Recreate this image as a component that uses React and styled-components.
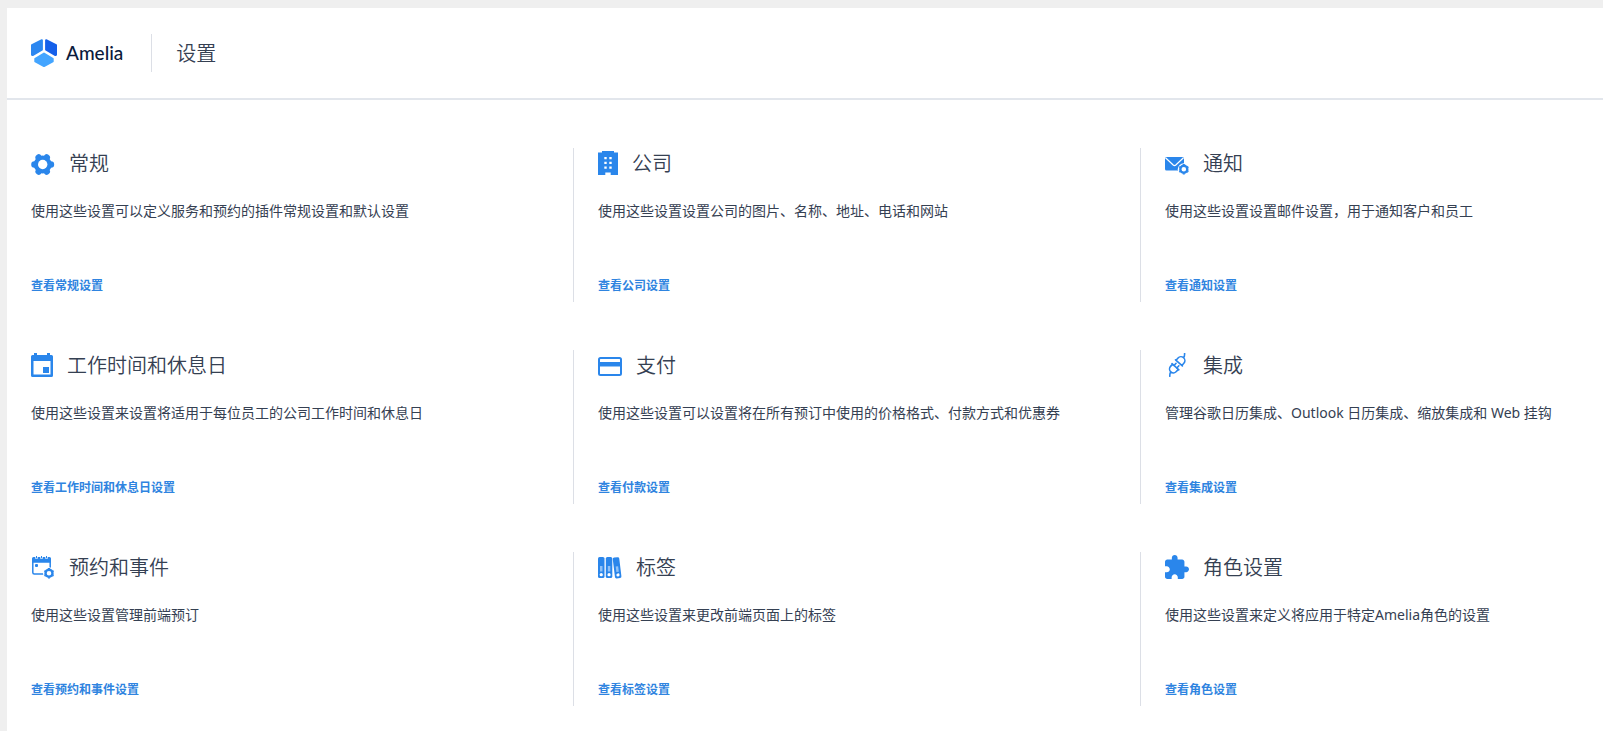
import React from "react";
import styled, { createGlobalStyle } from "styled-components";

const GlobalStyle = createGlobalStyle`
  * { box-sizing: border-box; }
  body {
    margin: 0;
    background: #efefef;
    color: #354052;
    font-family: "Noto Sans", "Noto Sans CJK SC", sans-serif;
  }
`;

const Page = styled.div`
  padding: 8px 0 0 7px;
`;

const Panel = styled.main`
  min-height: calc(100vh - 8px);
  background: #fff;
`;

const Header = styled.header`
  display: flex;
  align-items: center;
  height: 92px;
  padding: 0 24px;
  border-bottom: 2px solid #e2e6ec;
`;

const Brand = styled.div`
  display: flex;
  align-items: center;
  gap: 9px;
  padding-right: 28px;
`;

const BrandName = styled.span`
  color: #0b1a3c;
  font-family: Lato, sans-serif;
  font-size: 19px;
  font-weight: 500;
  line-height: 28px;
`;

const PageTitle = styled.h1`
  margin: 0;
  padding-left: 24px;
  border-left: 1px solid #dcdfe6;
  font-family: "Noto Sans CJK SC", sans-serif;
  font-size: 20px;
  font-weight: 350;
  line-height: 38px;
`;

const Grid = styled.div`
  display: grid;
  grid-template-columns: 27fr 27fr 22fr;
  row-gap: 48px;
  padding: 48px 0 24px;
`;

const Card = styled.section`
  min-width: 0;
  padding: 0 0 7px 24px;
  border-right: 1px solid #dcdfe6;

  &:nth-child(3n) {
    border-right: 0;
  }
`;

const CardHead = styled.div`
  display: flex;
  align-items: center;
  gap: 14px;
  height: 30px;

  svg {
    flex: none;
    color: #2a86eb;
  }
`;

const CardTitle = styled.h2`
  margin: 0;
  font-family: "Noto Sans CJK SC", sans-serif;
  font-size: 20px;
  font-weight: 350;
  line-height: 30px;
`;

const CardText = styled.p`
  margin: 23px 0 56px;
  font-size: 14px;
  line-height: 20px;
`;

const CardLink = styled.a`
  display: block;
  width: fit-content;
  color: #2f84e0;
  font-size: 12px;
  font-weight: 600;
  line-height: 18px;
  text-decoration: none;
`;

const Logo = () => (
  <svg width="26" height="28" viewBox="0 0 26 28" strokeWidth="2" strokeLinejoin="round" aria-hidden="true">
    <path d="M10.9 1.2 1 6.2v9.6l.6.3 9.3-5.4z" fill="#2c87f0" stroke="#2c87f0" />
    <path d="M15.1 1.2 25 6.2v9.6l-.6.3-9.3-5.4z" fill="#1560ea" stroke="#1560ea" />
    <path d="M13 14.6 4.3 19.8v2.6L13 27l8.7-4.6v-2.6z" fill="#44a5ff" stroke="#44a5ff" />
  </svg>
);

const Icon = ({ width = 24, box = "0 0 24 24", children }) => (
  <svg width={width} height="24" viewBox={box} fill="currentColor" aria-hidden="true">
    {children}
  </svg>
);

const GearIcon = () => (
  <Icon>
    <circle cx="11.7" cy="13.5" r="9" />
    <path
      d="M3.4 13.5h16.6M7.6 6.4l8.2 14.2M15.8 6.4 7.6 20.6"
      stroke="currentColor"
      strokeWidth="6.4"
      strokeLinecap="round"
    />
    <circle cx="11.7" cy="13.5" r="4.7" fill="#fff" />
  </Icon>
);

const BuildingIcon = () => (
  <Icon width={20} box="0 0 20 24">
    <path
      fillRule="evenodd"
      d="M4 0h12v1.5h4V24h-7.3v-2.5H7.3V24H0V1.5h4zM6.3 6v2.2h2.4V6zm5 0v2.2h2.4V6zm-5 4.8V13h2.4v-2.2zm5 0V13h2.4v-2.2zm-5 4.8v2.2h2.4v-2.2zm5 0v2.2h2.4v-2.2z"
    />
  </Icon>
);

const SmallGear = ({ cx, cy }) => (
  <g transform={`translate(${cx} ${cy})`}>
    <circle r="6" fill="#fff" />
    <circle r="3.5" fill="none" stroke="currentColor" strokeWidth="2.4" />
    <path
      d="M0-4.2v-1M0 4.2v1M-3.7-2.1l-.8-.5M3.7-2.1l.8-.5M-3.7 2.1l-.8.5M3.7 2.1l.8.5"
      stroke="currentColor"
      strokeWidth="2"
    />
  </g>
);

const MailIcon = () => (
  <Icon>
    <rect y="6" width="19" height="13.5" rx="1.5" />
    <path d="M.5 6.7 8.2 14a2 2 0 0 0 2.6 0l7.7-7.3" fill="none" stroke="#fff" strokeWidth="1.2" />
    <SmallGear cx={18.8} cy={18.3} />
  </Icon>
);

const CalendarIcon = () => (
  <Icon width={22} box="0 0 22 24">
    <path
      fillRule="evenodd"
      d="M3 0h3v2h10V0h3v2h1.5A1.5 1.5 0 0 1 22 3.500v19a1.5 1.5 0 0 1-1.5 1.500h-19A1.5 1.5 0 0 1 0 22.500v-19A1.5 1.5 0 0 1 1.500 2H3zM2.500 8v13.500h17V8zM12 14h6v6h-6z"
    />
  </Icon>
);

const CreditCardIcon = () => (
  <Icon>
    <rect x="1" y="5" width="22" height="17" rx="1.5" fill="none" stroke="currentColor" strokeWidth="2" />
    <path d="M1 9h22v4.5H1z" />
  </Icon>
);

const PlugIcon = () => (
  <Icon>
    <g
      transform="translate(12.2 11.8) rotate(-48)"
      fill="none"
      stroke="currentColor"
      strokeWidth="1.6"
      strokeLinecap="round"
      strokeLinejoin="round"
    >
      <path d="M-2.6-4.6v9.2M-2.6-3.9h-3a3.9 3.9 0 0 0 0 7.8h3M-9.5 0c-1.3 0-2.4.6-4 2.2" />
      <path d="M2.6-4.6v9.2M2.6-3.9h3a3.9 3.9 0 0 1 0 7.8h-3M9.5 0c1.3 0 2.4-.6 4-2.2" />
      <path d="M-2.6-1.9H.4M-2.6 1.9H.4" />
    </g>
  </Icon>
);

const EventIcon = () => (
  <Icon>
    <rect x="1.8" y="3.8" width="17.4" height="15.2" rx="1.5" fill="none" stroke="currentColor" strokeWidth="1.5" />
    <path d="M1 3.5A1.5 1.5 0 0 1 2.5 2h16A1.5 1.5 0 0 1 20 3.5v4.3H1z" />
    <path d="M5.5 1v2.8M10.5 1v2.8M15.5 1v2.8" stroke="#fff" strokeWidth="2.4" />
    <path d="M5.5 1v2.2M10.5 1v2.2M15.5 1v2.2" stroke="currentColor" strokeWidth="1" />
    <rect x="4" y="9" width="3" height="3" rx="1" />
    <SmallGear cx={18} cy={18.3} />
  </Icon>
);

const Binder = ({ transform }) => (
  <g transform={transform}>
    <rect width="6.5" height="21" rx="1.6" />
    <path d="M2 9h2.5v5.5H2z" fill="#8fc1f7" />
    <circle cx="3.25" cy="17.7" r="1.6" fill="#fff" />
  </g>
);

const LabelsIcon = () => (
  <Icon>
    <Binder transform="translate(0 2)" />
    <Binder transform="translate(7.8 2)" />
    <Binder transform="translate(14.6 2.8) rotate(-7)" />
  </Icon>
);

const PuzzleIcon = () => (
  <Icon box="2 1 21 21">
    <path d="M20.5 11H19V7c0-1.1-.9-2-2-2h-4V3.5C13 2.12 11.88 1 10.5 1S8 2.12 8 3.5V5H4c-1.1 0-1.99.9-1.99 2v3.8H3.5c1.49 0 2.7 1.21 2.7 2.7s-1.21 2.7-2.7 2.7H2V20c0 1.1.9 2 2 2h3.8v-1.5c0-1.49 1.21-2.7 2.7-2.7s2.7 1.21 2.7 2.7V22H17c1.1 0 2-.9 2-2v-4h1.5c1.38 0 2.5-1.12 2.5-2.5S21.88 11 20.5 11z" />
  </Icon>
);

const sections = [
  { id: "general", icon: GearIcon, title: "常规", text: "使用这些设置可以定义服务和预约的插件常规设置和默认设置", link: "查看常规设置" },
  { id: "company", icon: BuildingIcon, title: "公司", text: "使用这些设置设置公司的图片、名称、地址、电话和网站", link: "查看公司设置" },
  { id: "notifications", icon: MailIcon, title: "通知", text: "使用这些设置设置邮件设置，用于通知客户和员工", link: "查看通知设置" },
  { id: "hours", icon: CalendarIcon, title: "工作时间和休息日", text: "使用这些设置来设置将适用于每位员工的公司工作时间和休息日", link: "查看工作时间和休息日设置" },
  { id: "payments", icon: CreditCardIcon, title: "支付", text: "使用这些设置可以设置将在所有预订中使用的价格格式、付款方式和优惠券", link: "查看付款设置" },
  { id: "integrations", icon: PlugIcon, title: "集成", text: "管理谷歌日历集成、Outlook 日历集成、缩放集成和 Web 挂钩", link: "查看集成设置" },
  { id: "appointments", icon: EventIcon, title: "预约和事件", text: "使用这些设置管理前端预订", link: "查看预约和事件设置" },
  { id: "labels", icon: LabelsIcon, title: "标签", text: "使用这些设置来更改前端页面上的标签", link: "查看标签设置" },
  { id: "roles", icon: PuzzleIcon, title: "角色设置", text: "使用这些设置来定义将应用于特定Amelia角色的设置", link: "查看角色设置" },
];

export default function App() {
  return (
    <Page lang="zh-CN">
      <GlobalStyle />
      <Panel>
        <Header>
          <Brand>
            <Logo />
            <BrandName>Amelia</BrandName>
          </Brand>
          <PageTitle>设置</PageTitle>
        </Header>
        <Grid>
          {sections.map(({ id, icon: SectionIcon, title, text, link }) => (
            <Card key={id}>
              <CardHead>
                <SectionIcon />
                <CardTitle>{title}</CardTitle>
              </CardHead>
              <CardText>{text}</CardText>
              <CardLink href={`#${id}`}>{link}</CardLink>
            </Card>
          ))}
        </Grid>
      </Panel>
    </Page>
  );
}
